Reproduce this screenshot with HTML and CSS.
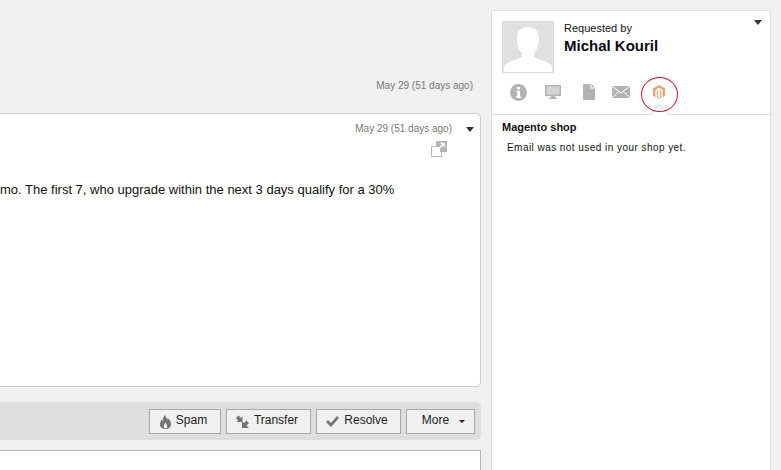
FILE: index.html
```html
<!DOCTYPE html>
<html lang="en">
<head>
    <meta charset="UTF-8">
    <title>Ticket</title>
    <link rel="stylesheet" href="styles.css">
</head>
<body>
    <div class="main">
        <div class="thread-date">May 29 (51 days ago)</div>
        <div class="message">
            <div class="message-head">
                <span class="date">May 29 (51 days ago)</span>
                <span class="caret"></span>
            </div>
            <div class="popout">
                <svg width="16" height="16" viewBox="0 0 16 16">
                    <path d="M5 0h11v11H9V6H5z" fill="#b5b5b5"/>
                    <path d="M8 7.500l5-5M9.500 2.500h3.500v3.500" fill="none" stroke="#fff" stroke-width="1.300"/>
                    <path d="M4.500 5.500H.5v10h10v-4" fill="none" stroke="#b5b5b5"/>
                </svg>
            </div>
            <p class="message-text">mo. The first 7, who upgrade within the next 3 days qualify for a 30%</p>
        </div>
        <div class="toolbar">
            <button class="btn btn-spam">
                <svg width="11" height="14" viewBox="0 0 11 14"><path d="M5 0c1 2 1.500 3 2.200 4.500.4-.5.6-1 .6-1.500C9.800 4.800 11 6.800 11 9.200 11 12 9 14 5.500 14S0 12 0 9.200C0 7.400.8 6 1.800 4.500c.1.900.4 1.400.8 1.800C2.600 4 3.500 2 5 0zM5.500 7.500C4.700 9 3.800 10 3.800 11.400c0 1 .7 1.800 1.700 1.800s1.700-.8 1.700-1.800C7.200 10 6.300 9 5.500 7.500z" fill="#757575"/></svg>
                Spam
            </button>
            <button class="btn btn-transfer">
                <svg width="13" height="13" viewBox="0 0 13 13"><path d="M6.500 1v6H.5L2 5.500 0 3 2.500.5 5 3zM6 6.500L8 8l2.500-2.500L13 8l-2.500 2.500L13 13H6z" fill="#757575"/></svg>
                Transfer
            </button>
            <button class="btn btn-resolve">
                <svg width="13" height="11" viewBox="0 0 13 11"><path d="M0 6l2-2 3 3 6-7 2 2-8 9z" fill="#757575"/></svg>
                Resolve
            </button>
            <button class="btn btn-more">
                More
                <span class="caret caret-small"></span>
            </button>
        </div>
        <div class="reply"></div>
    </div>
    <div class="side">
        <div class="requester">
            <div class="avatar">
                <svg width="50" height="50" viewBox="0 0 50 50"><path d="M25 5c7 0 11 4 11 12 0 6-2 11-5 14v4c5 3 13 4 17 8 1 2 1 5 1 7H1c0-2 0-5 1-7 4-4 12-5 17-8v-4c-3-3-5-8-5-14 0-8 4-12 11-12z" fill="#fff"/></svg>
            </div>
            <div class="who">
                <div class="who-label">Requested by</div>
                <div class="who-name">Michal Kouril</div>
            </div>
            <span class="caret side-caret"></span>
        </div>
        <div class="tabs">
            <span class="tab tab-info">
                <svg width="17" height="17" viewBox="0 0 17 17"><circle cx="8.500" cy="8.500" r="8.500" fill="#b3b3b3"/><rect x="7" y="3" width="3" height="2.500" fill="#fff"/><path d="M6.500 7H10v5.500h1V14H6v-1.500h1.200V8.300H6.500z" fill="#fff"/></svg>
            </span>
            <span class="tab tab-screen">
                <svg width="16" height="14" viewBox="0 0 16 14"><path d="M0 0h16v11H0z" fill="#b3b3b3"/><path d="M1.500 1.500h13v8h-13z" fill="#d4d4d4"/><path d="M6 11h4v1.500h2V14H4v-1.500h2z" fill="#b3b3b3"/></svg>
            </span>
            <span class="tab tab-doc">
                <svg width="12" height="16" viewBox="0 0 12 16"><path d="M0 0h7.500v4.500H12V16H0zM8.500 0L12 3.500H8.500z" fill="#b3b3b3"/></svg>
            </span>
            <span class="tab tab-mail">
                <svg width="18" height="12" viewBox="0 0 18 12"><path d="M0 0h18v12H0z" fill="#b3b3b3"/><path d="M.5 .5L9 7l8.500-6.500M.5 11.500L6.500 5.500M17.500 11.500L11.500 5.500" fill="none" stroke="#fff"/></svg>
            </span>
            <span class="tab tab-shop">
                <svg width="12" height="14" viewBox="0 0 12 14"><path d="M6 0l6 3.400v7.400l-2.400 1.400V4.700L6 2.700 2.400 4.700v7.500L0 10.800V3.400z" fill="#e9a373"/><path d="M5.100 4.600L3.600 5.400v7L6 14l2.400-1.600v-7l-1.500-.8v7.600L6 12.700l-.9-.5z" fill="#eeb48c"/></svg>
                <span class="notch"></span>
                <span class="ring"></span>
            </span>
        </div>
        <div class="shop">
            <h4 class="shop-title">Magento shop</h4>
            <p class="shop-text">Email was not used in your shop yet.</p>
        </div>
    </div>
</body>
</html>
```

FILE: styles.css
```css
html, body { margin: 0; padding: 0; height: 470px; overflow: hidden; }
body {
    display: flex;
    background: #f0f0f0;
    font-family: "Liberation Sans", Arial, sans-serif;
    font-size: 12px;
    color: #111;
}
.main { width: 481px; flex: none; }
.thread-date { margin-top: 80px; height: 33px; padding-right: 8px; text-align: right; font-size: 10px; line-height: 12px; color: #777; }
.message {
    height: 272px;
    background: #fff;
    border: 1px solid #cfcfcf;
    border-left: 0;
    border-radius: 0 5px 5px 0;
}
.message-head { display: flex; justify-content: flex-end; align-items: center; gap: 14px; height: 12px; padding-right: 6px; padding-top: 9px; }
.date { font-size: 10px; line-height: 12px; color: #777; }
.caret { display: inline-block; width: 0; height: 0; border-left: 4.500px solid transparent; border-right: 4.500px solid transparent; border-top: 5px solid #333; }
.popout { display: flex; justify-content: flex-end; padding: 6px 33px 0 0; height: 16px; }
.popout svg { display: block; }
.message-text { margin: 25px 0 0; font-size: 13px; line-height: 16px; white-space: nowrap; }
.toolbar {
    display: flex;
    justify-content: flex-end;
    align-items: center;
    gap: 5px;
    height: 38px;
    margin-top: 15px;
    padding-right: 6px;
    background: #dedede;
    border-radius: 0 5px 5px 0;
}
.btn {
    display: flex;
    align-items: center;
    justify-content: center;
    height: 25px;
    padding: 0 3px 2px 0;
    background: #f0f0f0;
    border: 1px solid #a9a9a9;
    font-family: inherit;
    font-size: 12px;
    color: #222;
}
.btn svg { margin: 3px 5px 0 0; }
.btn-spam { width: 72px; }
.btn-transfer { width: 85px; }
.btn-resolve { width: 85px; }
.btn-more { width: 69px; gap: 10px; padding: 0 0 2px 6px; }
.caret-small { border-left-width: 3.500px; border-right-width: 3.500px; border-top-width: 3px; border-top-color: #222; margin-top: 3px; }
.reply { height: 40px; margin-top: 10px; background: #fff; border: 1px solid #b5b5b5; border-left: 0; }
.side {
    width: 278px;
    height: 470px;
    flex: none;
    margin: 10px 0 0 10px;
    background: #fff;
    border: 1px solid #e0e0e0;
}
.requester { display: flex; position: relative; padding: 10px 10px 0; }
.avatar { width: 50px; height: 50px; background: #e1e1e1; border: 1px solid #dcdcdc; }
.avatar svg { display: block; }
.who { margin-left: 10px; }
.who-label { font-size: 11px; line-height: 13px; margin-top: 1px; }
.who-name { font-size: 15px; line-height: 17px; margin-top: 2px; font-weight: bold; color: #0a0a14; }
.side-caret { position: absolute; top: 9px; right: 8px; }
.tabs { display: flex; align-items: flex-start; height: 30px; padding: 11px 0 0 18px; border-bottom: 1px solid #e0e0e0; }
.tab { position: relative; display: flex; }
.tab-screen { margin: 1px 0 0 18px; }
.tab-doc { margin-left: 22px; }
.tab-mail { margin: 2px 0 0 17px; }
.tab-shop { margin: 1px 0 0 23px; }
.ring { position: absolute; left: -12px; top: -8px; width: 35px; height: 33px; border: 1px solid #e01030; border-radius: 50%; }
.notch { position: absolute; left: 0; top: 22px; width: 12px; height: 12px; background: #fff; border-left: 1px solid #e0e0e0; border-top: 1px solid #e0e0e0; transform: rotate(45deg); }
.shop { padding: 5px 10px; }
.shop-title { margin: 0; font-size: 11px; line-height: 14px; font-weight: bold; }
.shop-text { margin: 7px 0 0 5px; font-size: 10px; line-height: 13px; letter-spacing: .45px; }
```
